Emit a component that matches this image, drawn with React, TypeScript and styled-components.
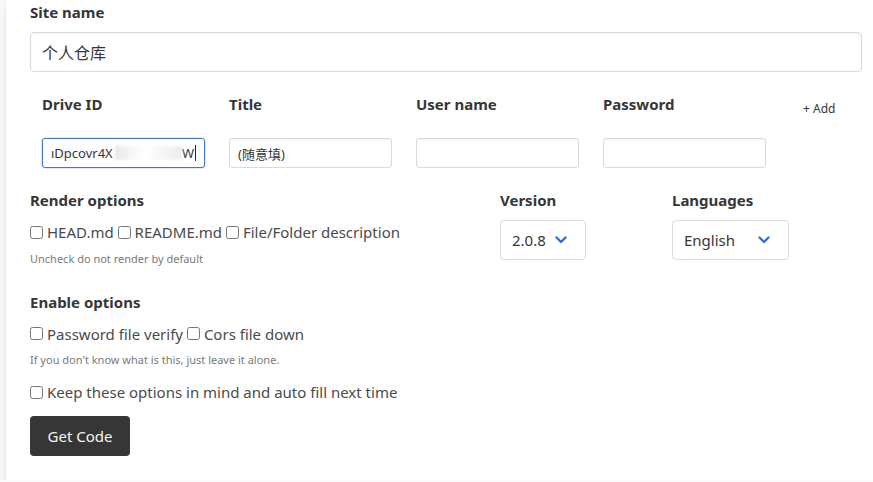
import React from "react";
import styled, { createGlobalStyle } from "styled-components";

const Global = createGlobalStyle`
  html, body { margin: 0; padding: 0; background: #fafafa; overflow: hidden; }
  body { font-family: "Noto Sans", "Open Sans", "Noto Sans CJK SC", sans-serif; color: #4a4a4a; }
  * { box-sizing: border-box; }
`;

const Card = styled.div`
  margin-left: 6px;
  margin-right: -30px;
  background: #fff;
  padding: 0 41px 24px 24px;
  height: 480px;
  box-shadow: 0 0.5em 1em -0.125em rgba(10, 10, 10, 0.1), 0 0 0 1px rgba(10, 10, 10, 0.03);
`;

const Label = styled.div`
  font-size: 15px;
  font-weight: 700;
  line-height: 24px;
  color: #363636;
`;

const SiteLabel = styled(Label)`
  margin-bottom: 8px;
`;

const BigInput = styled.div`
  height: 40px;
  border: 1px solid #dbdbdb;
  border-radius: 4px;
  display: flex;
  align-items: center;
  padding: 0 11px;
  font-size: 16px;
  color: #363636;
  font-family: "Noto Sans CJK SC", sans-serif;
  box-shadow: inset 0 0.0625em 0.125em rgba(10, 10, 10, 0.05);
`;

const Table = styled.div`
  display: grid;
  grid-template-columns: 187px 187px 187px 187px 1fr;
  margin-top: 12px;
`;

const HeadCell = styled.div`
  height: 40px;
  padding: 8px 12px;
  font-size: 15px;
  font-weight: 700;
  line-height: 24px;
  color: #363636;
`;

const AddCell = styled.div`
  height: 40px;
  padding: 12px 0 0 25px;
`;

const AddButton = styled.span`
  font-size: 12px;
  line-height: 16px;
  color: #363636;
  cursor: pointer;
`;

const BodyCell = styled.div`
  padding: 14px 12px 8px;
`;

const SmallInput = styled.div<{ $focused?: boolean }>`
  width: 163px;
  height: 30px;
  border: 1px solid ${(p) => (p.$focused ? "#3e74d6" : "#dbdbdb")};
  border-radius: 3px;
  display: flex;
  align-items: center;
  padding: 0 8px;
  font-size: 13px;
  color: #363636;
  white-space: nowrap;
  overflow: hidden;
  font-family: "Noto Sans", "Noto Sans CJK SC", sans-serif;
  box-shadow: ${(p) => (p.$focused ? "0 0 0 1px rgba(62,116,214,0.15)" : "inset 0 0.0625em 0.125em rgba(10, 10, 10, 0.05)")};
`;

const Redacted = styled.span`
  display: inline-block;
  width: 78px;
  height: 14px;
  margin-left: 2px;
  background: linear-gradient(90deg, #e6e6e6 0%, #f3f3f3 20%, #ffffff 45%, #f4f4f4 75%, #ececec 100%);
  filter: blur(1.5px);
`;

const Caret = styled.span`
  display: inline-block;
  width: 1px;
  height: 16px;
  background: #222;
  margin-left: 1px;
`;

const OptionsGrid = styled.div`
  display: grid;
  grid-template-columns: 470px 172px 1fr;
  margin-top: 12px;
`;

const Section = styled.div`
  display: flex;
  flex-direction: column;
`;

const CheckRow = styled.div`
  margin-top: 8px;
  font-size: 15px;
  line-height: 24px;
  color: #4a4a4a;
`;

const CheckLabel = styled.label`
  display: inline-flex;
  align-items: center;
  cursor: pointer;
`;

const Box = styled.input.attrs({ type: "checkbox" })`
  width: 13px;
  height: 13px;
  margin: 0 4px 0 0;
`;

const Help = styled.div`
  font-size: 11px;
  line-height: 18px;
  color: #7a7a7a;
  margin-top: 5px;
`;

const SelectBox = styled.div<{ $w: number }>`
  margin-top: 8px;
  width: ${(p) => p.$w}px;
  height: 40px;
  border: 1px solid #dbdbdb;
  border-radius: 4px;
  display: flex;
  align-items: center;
  justify-content: space-between;
  padding: 0 18px 0 11px;
  font-size: 15px;
  color: #363636;
`;

const EnableSection = styled(Section)`
  margin-top: 22px;
`;

const KeepRow = styled(CheckRow)`
  margin-top: 11px;
`;

const Button = styled.button`
  margin-top: 11px;
  width: 100px;
  height: 40px;
  border: none;
  border-radius: 4px;
  background: #363636;
  color: #f5f5f5;
  font-family: inherit;
  font-size: 15px;
  cursor: pointer;
`;

const Chevron = () => (
  <svg width="12" height="8" viewBox="0 0 12 8">
    <path d="M1.5 1.5 L6 6 L10.5 1.5" fill="none" stroke="#2f6fdf" strokeWidth="2.4" strokeLinecap="round" strokeLinejoin="round" />
  </svg>
);

export default function App() {
  return (
    <>
      <Global />
      <Card>
        <SiteLabel>Site name</SiteLabel>
        <BigInput>个人仓库</BigInput>

        <Table>
          <HeadCell>Drive ID</HeadCell>
          <HeadCell>Title</HeadCell>
          <HeadCell>User name</HeadCell>
          <HeadCell>Password</HeadCell>
          <AddCell>
            <AddButton>+ Add</AddButton>
          </AddCell>
          <BodyCell>
            <SmallInput $focused>
              ıDpcovr4X<Redacted />W<Caret />
            </SmallInput>
          </BodyCell>
          <BodyCell>
            <SmallInput>(随意填)</SmallInput>
          </BodyCell>
          <BodyCell>
            <SmallInput />
          </BodyCell>
          <BodyCell>
            <SmallInput />
          </BodyCell>
          <div />
        </Table>

        <OptionsGrid>
          <Section>
            <Label>Render options</Label>
            <CheckRow>
              <CheckLabel><Box />HEAD.md</CheckLabel>{" "}
              <CheckLabel><Box />README.md</CheckLabel>{" "}
              <CheckLabel><Box />File/Folder description</CheckLabel>
            </CheckRow>
            <Help>Uncheck do not render by default</Help>
          </Section>
          <Section>
            <Label>Version</Label>
            <SelectBox $w={86}>
              2.0.8
              <Chevron />
            </SelectBox>
          </Section>
          <Section>
            <Label>Languages</Label>
            <SelectBox $w={117}>
              English
              <Chevron />
            </SelectBox>
          </Section>
        </OptionsGrid>

        <EnableSection>
          <Label>Enable options</Label>
          <CheckRow>
            <CheckLabel><Box />Password file verify</CheckLabel>{" "}
            <CheckLabel><Box />Cors file down</CheckLabel>
          </CheckRow>
          <Help>If you don't know what is this, just leave it alone.</Help>
        </EnableSection>

        <KeepRow>
          <CheckLabel><Box />Keep these options in mind and auto fill next time</CheckLabel>
        </KeepRow>

        <Button>Get Code</Button>
      </Card>
    </>
  );
}
